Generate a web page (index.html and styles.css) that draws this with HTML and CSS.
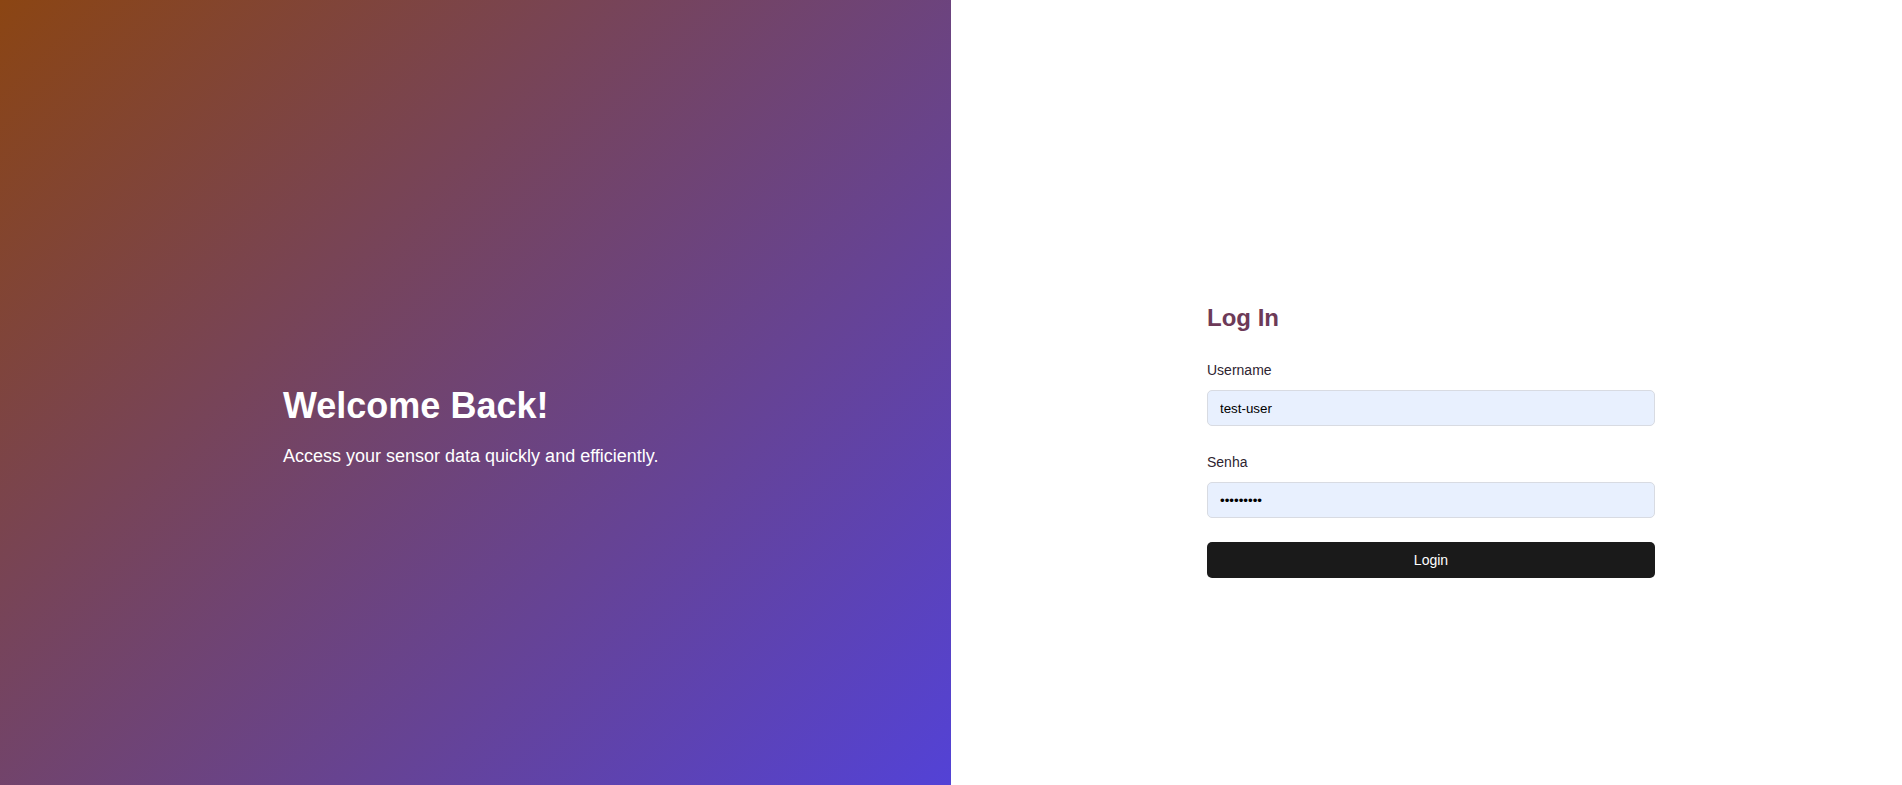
FILE: index.html
```html
<!DOCTYPE html>
<html lang="en">
<head>
<meta charset="utf-8">
<title>Login</title>
<link rel="stylesheet" href="styles.css">
</head>
<body>
<div class="page">
  <section class="hero">
    <div class="hero-content">
      <h1 class="hero-title">Welcome Back!</h1>
      <p class="hero-text">Access your sensor data quickly and efficiently.</p>
    </div>
  </section>
  <section class="auth">
    <form class="login-form" onsubmit="return false">
      <h2 class="login-title">Log In</h2>
      <div class="field">
        <label class="field-label" for="username">Username</label>
        <input class="field-input" id="username" type="text" value="test-user">
      </div>
      <div class="field">
        <label class="field-label" for="password">Senha</label>
        <input class="field-input" id="password" type="password" value="123456789">
      </div>
      <button class="login-btn" type="submit">Login</button>
    </form>
  </section>
</div>
</body>
</html>
```
FILE: styles.css
```css
* { box-sizing: border-box; }
html, body { margin: 0; padding: 0; }
body {
  font-family: "Liberation Sans", Arial, sans-serif;
  background: #ffffff;
}
.page {
  display: flex;
  width: 100%;
  height: 785px;
}
.hero {
  flex: 0 0 951px;
  background: linear-gradient(135deg, #8b4513 0%, #5342d6 100%);
  color: #ffffff;
  display: flex;
  align-items: flex-start;
  padding-left: 283px;
  padding-top: 385px;
}
.hero-title {
  margin: 0 0 19px 0;
  font-size: 36px;
  font-weight: 700;
  line-height: normal;
}
.hero-text {
  margin: 0;
  font-size: 18px;
  line-height: normal;
}
.auth {
  flex: 1;
  display: flex;
  align-items: flex-start;
  padding-left: 256px;
  padding-top: 304px;
}
.login-form {
  width: 448px;
  display: flex;
  flex-direction: column;
}
.login-title {
  margin: 0 0 30px 0;
  font-size: 24px;
  font-weight: 700;
  color: #6d3a58;
  line-height: normal;
}
.field {
  display: flex;
  flex-direction: column;
  margin-bottom: 28px;
}
.field:last-of-type { margin-bottom: 24px; }
.field-label {
  font-size: 14px;
  line-height: 16px;
  color: #2e2430;
  margin-bottom: 12px;
}
.field-input {
  height: 36px;
  width: 100%;
  padding: 0 12px;
  border: 1px solid #d8dbe2;
  border-radius: 5px;
  background: #e8f0fe;
  font-family: "Liberation Sans", Arial, sans-serif;
  font-size: 13.33px;
  color: #000000;
  outline: none;
}
.login-btn {
  height: 36px;
  width: 100%;
  border: none;
  border-radius: 5px;
  background: #1a1a1a;
  color: #ffffff;
  font-family: "Liberation Sans", Arial, sans-serif;
  font-size: 14px;
  cursor: pointer;
}
```
